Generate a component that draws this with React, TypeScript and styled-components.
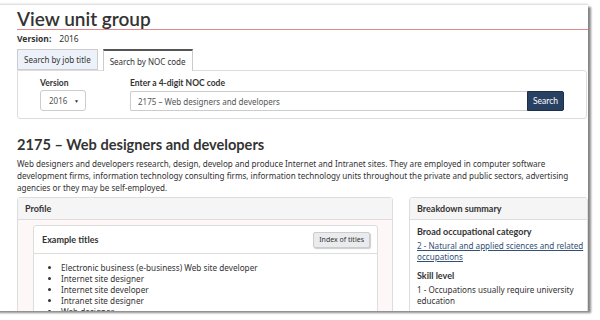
import React from "react";
import { styled, createGlobalStyle } from "styled-components";

const GlobalStyle = createGlobalStyle`
  html, body {
    margin: 0;
    padding: 0;
    background: #fff;
  }
  body {
    width: 600px;
    height: 320px;
    overflow: hidden;
    font-family: "Noto Sans", "Open Sans", sans-serif;
    color: #333;
  }
`;

const titles = [
  "Electronic business (e-business) Web site developer",
  "Internet site designer",
  "Internet site developer",
  "Intranet site designer",
  "Web designer",
];

export default function App() {
  return (
    <>
      <GlobalStyle />
      <Frame>
        <Title>View unit group</Title>
        <VersionLine>
          <strong>Version:</strong>
          <span>2016</span>
        </VersionLine>

        <Tabs>
          <Tab>Search by job title</Tab>
          <Tab $active>Search by NOC code</Tab>
        </Tabs>
        <SearchPanel>
          <Field>
            <Label>Version</Label>
            <Select>
              <span>2016</span>
              <Caret>▼</Caret>
            </Select>
          </Field>
          <Field $grow>
            <Label>Enter a 4-digit NOC code</Label>
            <InputRow>
              <Input>2175 – Web designers and developers</Input>
              <SearchButton>Search</SearchButton>
            </InputRow>
          </Field>
        </SearchPanel>

        <Heading>2175 – Web designers and developers</Heading>
        <Intro>
          Web designers and developers research, design, develop and produce Internet and Intranet sites. They are employed in computer software
          <br />
          development firms, information technology consulting firms, information technology units throughout the private and public sectors, advertising
          <br />
          agencies or they may be self-employed.
        </Intro>

        <Columns>
          <Panel $wide>
            <PanelHeader>Profile</PanelHeader>
            <ProfileBody>
              <InnerPanel>
                <InnerHeader>
                  <span>Example titles</span>
                  <GreyButton>Index of titles</GreyButton>
                </InnerHeader>
                <TitleList>
                  {titles.map((t) => (
                    <li key={t}>{t}</li>
                  ))}
                </TitleList>
              </InnerPanel>
            </ProfileBody>
          </Panel>

          <Panel>
            <PanelHeader>Breakdown summary</PanelHeader>
            <SummaryBody>
              <Term>Broad occupational category</Term>
              <Definition>
                <a href="#">2 - Natural and applied sciences and related occupations</a>
              </Definition>
              <Term>Skill level</Term>
              <Definition>1 - Occupations usually require university education</Definition>
            </SummaryBody>
          </Panel>
        </Columns>
      </Frame>
    </>
  );
}

const Frame = styled.div`
  box-sizing: border-box;
  width: 592px;
  height: 306px;
  margin: 5px 0 0 -4px;
  padding: 4px 0 0 21px;
  background: #fff;
  overflow: hidden;
  box-shadow: 0 -1px 2px rgba(0, 0, 0, 0.18), 3px 2px 2px rgba(0, 0, 0, 0.45);
`;

const Title = styled.h1`
  margin: 0;
  font-family: Lato, "Liberation Sans", sans-serif;
  font-weight: 600;
  font-size: 19px;
  line-height: 20px;
  color: #333;
  border-bottom: 1px solid #e08a8a;
`;

const VersionLine = styled.div`
  display: flex;
  gap: 8px;
  margin-top: 3px;
  font-size: 8.5px;
  line-height: 12px;
  color: #333;

  strong {
    font-weight: 700;
  }
`;

const Tabs = styled.div`
  display: flex;
  gap: 5px;
  margin-top: 4px;
  position: relative;
  z-index: 1;
`;

const Tab = styled.div<{ $active?: boolean }>`
  box-sizing: border-box;
  height: ${({ $active }) => ($active ? 22 : 21)}px;
  padding: 0 6px;
  display: flex;
  align-items: center;
  font-size: 8px;
  color: #333;
  background: ${({ $active }) => ($active ? "#fff" : "#edf2fa")};
  border: 1px solid #ccc;
  border-top: ${({ $active }) => ($active ? "2px solid #555" : "1px solid #ccc")};
  border-bottom: ${({ $active }) => ($active ? "none" : "1px solid #ccc")};
`;

const SearchPanel = styled.div`
  box-sizing: border-box;
  width: 570px;
  height: 49px;
  margin-top: -1px;
  padding: 6px 22px 0;
  display: flex;
  gap: 44px;
  border: 1px solid #ddd;
  border-radius: 0 3px 3px 3px;
`;

const Field = styled.div<{ $grow?: boolean }>`
  display: flex;
  flex-direction: column;
  gap: 1px;
  flex: ${({ $grow }) => ($grow ? 1 : "none")};
`;

const Label = styled.div`
  font-family: Lato, "Liberation Sans", sans-serif;
  font-size: 8.5px;
  font-weight: 700;
  line-height: 12px;
  color: #333;
`;

const Select = styled.div`
  box-sizing: border-box;
  width: 46px;
  height: 21px;
  padding: 0 6px 0 8px;
  display: flex;
  align-items: center;
  justify-content: space-between;
  font-size: 8px;
  color: #555;
  border: 1px solid #ccc;
  border-radius: 3px;
`;

const Caret = styled.span`
  font-size: 5px;
  color: #333;
`;

const InputRow = styled.div`
  display: flex;
  height: 20px;
  margin-top: 1px;
`;

const Input = styled.div`
  box-sizing: border-box;
  flex: 1;
  padding: 0 7px;
  display: flex;
  align-items: center;
  font-size: 8px;
  color: #555;
  border: 1px solid #ccc;
  border-right: none;
  border-radius: 2px 0 0 2px;
`;

const SearchButton = styled.div`
  box-sizing: border-box;
  width: 37px;
  display: flex;
  align-items: center;
  justify-content: center;
  font-family: Lato, "Liberation Sans", sans-serif;
  font-size: 8.5px;
  color: #fff;
  background: #284162;
  border: 1px solid #1c2f47;
  border-radius: 0 2px 2px 0;
`;

const Heading = styled.h2`
  margin: 16px 0 0;
  font-family: Lato, "Liberation Sans", sans-serif;
  font-weight: 700;
  font-size: 14.6px;
  line-height: 20px;
  color: #333;
`;

const Intro = styled.p`
  margin: 3px 0 0;
  font-size: 8.1px;
  line-height: 12px;
  color: #333;
  white-space: nowrap;
`;

const Columns = styled.div`
  display: flex;
  gap: 16px;
  margin-top: 3px;
  align-items: flex-start;
`;

const Panel = styled.div<{ $wide?: boolean }>`
  box-sizing: border-box;
  width: ${({ $wide }) => ($wide ? 376 : 179)}px;
  border: 1px solid #ddd;
  border-radius: 3px;
  background: #fff;
`;

const PanelHeader = styled.div`
  height: 21px;
  padding: 0 7px;
  display: flex;
  align-items: center;
  font-family: Lato, "Liberation Sans", sans-serif;
  font-weight: 700;
  font-size: 9px;
  color: #333;
  background: #f5f5f5;
  border-bottom: 1px solid #ddd;
`;

const ProfileBody = styled.div`
  padding: 5px 14px 20px 15px;
  background: #fdf8f7;
`;

const InnerPanel = styled.div`
  border: 1px solid #ddd;
  border-radius: 3px;
  background: #fff;
`;

const InnerHeader = styled.div`
  height: 27px;
  padding: 0 7px 0 8px;
  display: flex;
  align-items: center;
  justify-content: space-between;
  font-family: Lato, "Liberation Sans", sans-serif;
  font-weight: 700;
  font-size: 9px;
  color: #333;
  border-bottom: 1px solid #ddd;
`;

const GreyButton = styled.div`
  box-sizing: border-box;
  height: 16px;
  padding: 0 5px;
  display: flex;
  align-items: center;
  font-family: "Noto Sans", sans-serif;
  font-weight: 400;
  font-size: 7px;
  color: #333;
  background: #eaebed;
  border: 1px solid #ccc;
  border-radius: 2px;
  box-shadow: 1px 1px 1px rgba(0, 0, 0, 0.2);
`;

const TitleList = styled.ul`
  margin: 0;
  padding: 8px 0 0 27px;
  font-size: 8.2px;
  line-height: 11px;
  color: #333;

  li::marker {
    font-size: 8px;
  }
`;

const SummaryBody = styled.div`
  padding: 6px 0 10px 7px;
`;

const Term = styled.div`
  font-family: Lato, "Liberation Sans", sans-serif;
  font-weight: 700;
  font-size: 9px;
  line-height: 12px;
  color: #333;
  margin-top: 8px;

  &:first-child {
    margin-top: 0;
  }
`;

const Definition = styled.div`
  margin-top: 2px;
  font-size: 8.1px;
  line-height: 11px;
  color: #333;

  a {
    color: #335075;
    text-decoration: underline;
  }
`;
